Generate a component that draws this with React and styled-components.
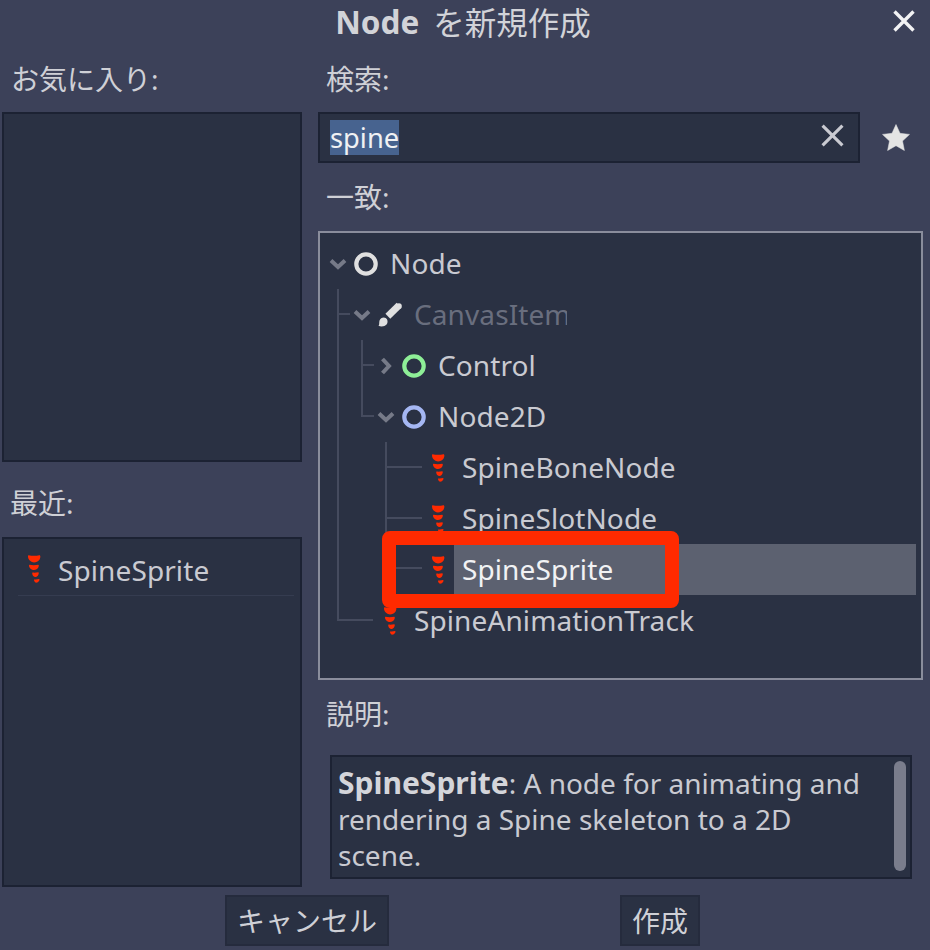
import React from "react";
import styled, { createGlobalStyle } from "styled-components";

const Global = createGlobalStyle`
  html, body { margin: 0; padding: 0; background: #3c4159; }
  * { box-sizing: border-box; }
  body { font-family: "Noto Sans", "Noto Sans CJK JP", sans-serif; }
`;

const Page = styled.div`
  position: relative;
  width: 930px;
  height: 950px;
  overflow: hidden;
  background: #3c4159;
  color: #cfd0d6;
  font-size: 28px;
  display: flex;
  flex-direction: column;
`;
const Header = styled.header`
  height: 46px;
  display: flex;
  align-items: center;
  justify-content: center;
  font-size: 31.5px;
  color: #d2d3d8;
  padding: 0 4px 4px 0;
  b { font-weight: 700; margin-right: 14px; }
`;
const CloseButton = styled.div`
  position: absolute;
  left: 893px;
  top: 10px;
  width: 22px;
  height: 22px;
  display: flex;
`;
const Body = styled.div`
  display: grid;
  grid-template-columns: 300px 605px;
  column-gap: 16px;
  padding-left: 2px;
  height: 841px;
`;
const Column = styled.div`
  display: flex;
  flex-direction: column;
`;
const Label = styled.div`
  display: flex;
  align-items: center;
  height: ${(p) => p.$h}px;
  padding-left: ${(p) => p.$x}px;
  padding-bottom: ${(p) => p.$lift || 0}px;
  padding-top: ${(p) => p.$drop || 0}px;
  white-space: nowrap;
`;
const Panel = styled.div`
  height: 350px;
  background: #2a3143;
  border: 2px solid #1c2233;
  padding: 7px 6px 0 14px;
`;
const RecentRow = styled.div`
  display: flex;
  align-items: center;
  height: 50px;
  gap: 17px;
  padding-left: 9px;
  border-bottom: 1px solid #353c50;
  color: #c9cad1;
  letter-spacing: 0.1px;
  svg { margin-top: -4px; }
  span { margin-top: -2px; }
`;
const SearchRow = styled.div`
  display: flex;
  align-items: center;
  height: 51px;
  width: 605px;
`;
const SearchBox = styled.div`
  width: 542px;
  height: 51px;
  background: #2a3143;
  border: 2px solid #1c2233;
  padding-left: 10px;
  padding-right: 14px;
  display: flex;
  align-items: center;
  justify-content: space-between;
`;
const Selected = styled.span`
  display: block;
  background: #47638f;
  color: #f0f1f3;
  height: 35px;
  font-size: 27.3px;
  line-height: 35px;
`;
const ClearButton = styled.div`
  width: 23px;
  height: 23px;
  display: flex;
  margin-top: -4px;
`;
const StarButton = styled.div`
  width: 28px;
  height: 27px;
  margin-left: 22px;
  margin-top: -1px;
  display: flex;
`;
const Tree = styled.div`
  position: relative;
  width: 605px;
  height: 449px;
  background: #2a3143;
  border: 2px solid #8a8d9c;
  padding: 5px 5px 0 0;
`;
const Guides = styled.svg`
  position: absolute;
  left: 0;
  top: 0;
`;
const Row = styled.div`
  position: relative;
  display: flex;
  align-items: center;
  height: 51px;
  padding-left: ${(p) => 6 + p.$depth * 24}px;
`;
const ChevronSlot = styled.div`
  width: 24px;
  height: 24px;
  display: flex;
  align-items: center;
  justify-content: center;
`;
const IconSlot = styled.div`
  width: 24px;
  height: 30px;
  margin-left: 4px;
  display: flex;
  align-items: center;
  justify-content: center;
`;
const RowLabel = styled.div`
  flex: ${(p) => (p.$dim ? "0 0 161px" : "1")};
  height: 51px;
  line-height: 50px;
  margin-left: 4px;
  padding-left: 8px;
  letter-spacing: 0.1px;
  white-space: nowrap;
  overflow: hidden;
  color: ${(p) => (p.$selected ? "#f1f2f4" : p.$dim ? "#696e7e" : "#c9cad1")};
  background: ${(p) => (p.$selected ? "#5c6170" : "transparent")};
`;
const Callout = styled.div`
  position: absolute;
  left: 62px;
  top: 298px;
  width: 297px;
  height: 77px;
  border: 14px solid #ff2a00;
  border-radius: 8px;
`;
const Description = styled.div`
  position: relative;
  width: 582px;
  height: 124px;
  margin-left: 12px;
  background: #2a3143;
  border: 2px solid #1c2233;
  padding: 8px 44px 0 6px;
  line-height: 36px;
  color: #c9cad1;
  b { color: #d4d5da; font-weight: 700; font-size: 30px; }
`;
const Scrollbar = styled.div`
  position: absolute;
  right: 4px;
  top: 4px;
  width: 12px;
  height: 110px;
  background: #7a7d8c;
  border-radius: 6px;
`;
const Footer = styled.footer`
  display: flex;
  padding: 8px 0 0 225px;
  gap: 231px;
`;
const Button = styled.div`
  height: 51px;
  width: ${(p) => p.$w}px;
  background: #2a3143;
  border: 2px solid #252b3d;
  padding-bottom: 2px;
  display: flex;
  align-items: center;
  justify-content: center;
  color: #cfd0d6;
`;

const Cross = ({ color, width }) => (
  <svg viewBox="0 0 22 22" width="100%" height="100%">
    <path d="M1.5 1.5 L20.5 20.5 M20.5 1.5 L1.5 20.5" stroke={color} strokeWidth={width} fill="none" />
  </svg>
);

const Star = () => (
  <svg viewBox="0 0 28 27" width="28" height="27">
    <path
      d="M14 0.5 L18 9.3 L27.5 10.4 L20.5 17 L22.4 26.5 L14 21.7 L5.6 26.5 L7.5 17 L0.5 10.4 L10 9.3 Z"
      fill="#e4e4e4"
      stroke="#e4e4e4"
      strokeWidth="0.5"
      strokeLinejoin="round"
    />
  </svg>
);

const Chevron = ({ open }) => (
  <svg width="20" height="20" viewBox="0 0 20 20">
    <path
      d={open ? "M3 6.5 L10 13 L17 6.5" : "M6.5 3 L13 10 L6.5 17"}
      fill="none"
      stroke="#767a88"
      strokeWidth="4"
    />
  </svg>
);

const Ring = ({ color }) => (
  <svg width="24" height="24" viewBox="0 0 24 24">
    <circle cx="12" cy="12" r="9.7" fill="none" stroke={color} strokeWidth="4.2" />
  </svg>
);

const Brush = () => (
  <svg width="28" height="28" viewBox="0 0 28 28">
    <path d="M24.6 2.6 L11.5 15.5" stroke="#e0e0e0" strokeWidth="8" strokeLinecap="butt" fill="none" />
    <circle cx="24.4" cy="3.6" r="3.4" fill="#e0e0e0" />
    <path d="M0.6 26.6 C2 25 1 22.6 1.8 20.4 C2.8 17.4 6.6 16 9 17.6 C11.6 19.2 11.8 23 10 25.2 C8 27.6 3.2 28 0.6 26.6 Z" fill="#e0e0e0" />
  </svg>
);

const Spine = () => (
  <svg width="14" height="30" viewBox="0 0 14 30">
    <g fill="#ff2a00">
      <path d="M1.6 1.2 C5 2 9 2 12.4 1.2 C13.8 1.2 13.6 4 12.4 5.8 C11 7.8 9 8.4 7 8.4 C4.6 8.4 1 6.5 1 2.6 C1 1.8 1.2 1.2 1.6 1.2 Z" />
      <path d="M2.4 10.8 C5 11.3 8.5 11.3 11.2 10.8 C12 10.8 12 12 11.3 13.6 C10.5 15.2 9 15.9 7 15.9 C4.6 15.9 2 14 2 11.4 C2 11 2.1 10.8 2.4 10.8 Z" />
      <path d="M5.6 18.6 C7.5 18.9 9.5 18.6 11.2 18.2 C12 18.2 12 20 11 21.4 C10 22.6 9 22.9 8 22.9 C6.4 22.9 5.2 21 5.2 19.2 C5.2 18.9 5.3 18.6 5.6 18.6 Z" />
      <path d="M7.4 25.4 C8.8 25.6 10.6 25.4 12 25 C12.8 25 12.6 26.6 11.6 27.6 C10.8 28.5 10 28.7 9.4 28.7 C8.2 28.7 7 27.4 7 25.8 C7 25.6 7.1 25.4 7.4 25.4 Z" />
    </g>
  </svg>
);

const GUIDE_SEGMENTS = [
  "M18 56 V387 H53",
  "M18 81 H30",
  "M42 107 V183 H54",
  "M42 132 H54",
  "M66 209 V335 H102",
  "M66 234 H102",
  "M66 285 H102",
];

const TREE_ROWS = [
  { depth: 0, chevron: "open", icon: <Ring color="#e0e0e0" />, text: "Node" },
  { depth: 1, chevron: "open", icon: <Brush />, text: "CanvasItem", dim: true },
  { depth: 2, chevron: "closed", icon: <Ring color="#8eef97" />, text: "Control" },
  { depth: 2, chevron: "open", icon: <Ring color="#a5b7f3" />, text: "Node2D" },
  { depth: 3, icon: <Spine />, text: "SpineBoneNode" },
  { depth: 3, icon: <Spine />, text: "SpineSlotNode" },
  { depth: 3, icon: <Spine />, text: "SpineSprite", selected: true },
  { depth: 1, icon: <Spine />, text: "SpineAnimationTrack" },
];

export default function App() {
  return (
    <Page>
      <Global />
      <Header>
        <b>Node</b>を新規作成
      </Header>
      <CloseButton>
        <Cross color="#f2f2f4" width="3.4" />
      </CloseButton>
      <Body>
        <Column>
          <Label $h={66} $x={9} $lift={3}>お気に入り:</Label>
          <Panel />
          <Label $h={75} $x={8} $drop={4}>最近:</Label>
          <Panel>
            <RecentRow>
              <Spine />
              <span>SpineSprite</span>
            </RecentRow>
          </Panel>
        </Column>
        <Column>
          <Label $h={66} $x={8} $lift={3}>検索:</Label>
          <SearchRow>
            <SearchBox>
              <Selected>spine</Selected>
              <ClearButton>
                <Cross color="#c9cad1" width="3" />
              </ClearButton>
            </SearchBox>
            <StarButton>
              <Star />
            </StarButton>
          </SearchRow>
          <Label $h={68} $x={8} $lift={3}>一致:</Label>
          <Tree>
            <Guides width="601" height="445" viewBox="0 0 601 445">
              <path d={GUIDE_SEGMENTS.join(" ")} fill="none" stroke="#454b5e" strokeWidth="2" />
            </Guides>
            {TREE_ROWS.map((row) => (
              <Row key={row.text} $depth={row.depth}>
                <ChevronSlot>
                  {row.chevron && <Chevron open={row.chevron === "open"} />}
                </ChevronSlot>
                <IconSlot>{row.icon}</IconSlot>
                <RowLabel $selected={row.selected} $dim={row.dim}>{row.text}</RowLabel>
              </Row>
            ))}
            <Callout />
          </Tree>
          <Label $h={75} $x={8} $lift={9}>説明:</Label>
          <Description>
            <b>SpineSprite</b>: A node for animating and rendering a Spine skeleton to a 2D scene.
            <Scrollbar />
          </Description>
        </Column>
      </Body>
      <Footer>
        <Button $w={164}>キャンセル</Button>
        <Button $w={80}>作成</Button>
      </Footer>
    </Page>
  );
}
